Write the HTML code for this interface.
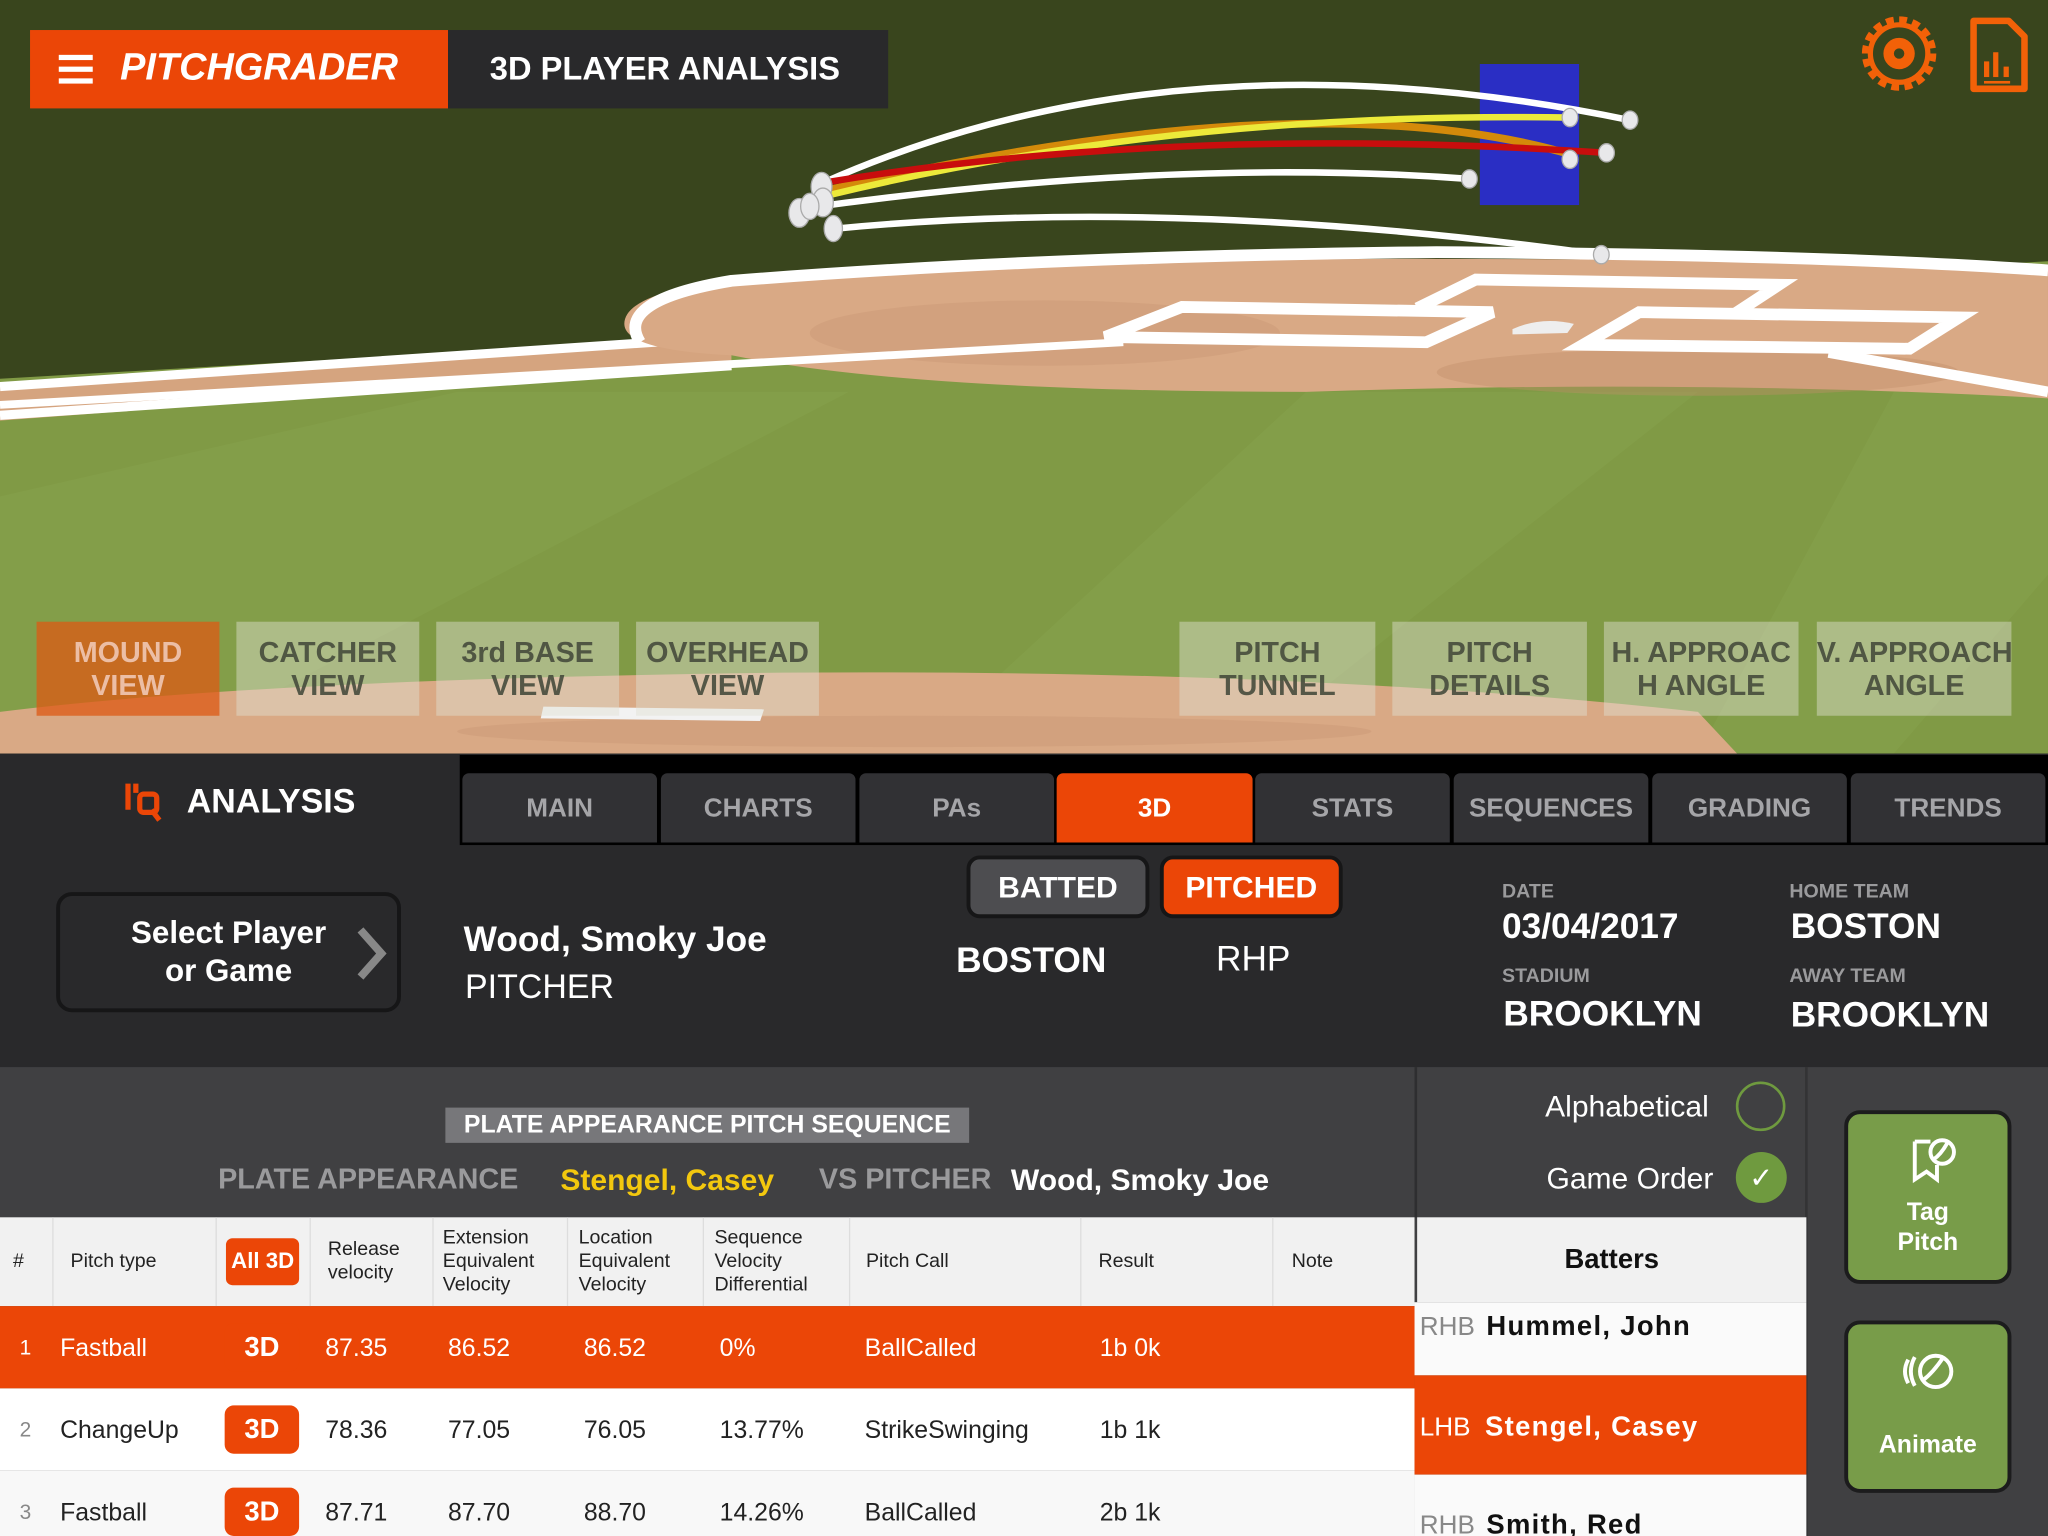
<!DOCTYPE html>
<html><head><meta charset="utf-8">
<style>
*{margin:0;padding:0;box-sizing:border-box}
html,body{width:2048px;height:1536px;overflow:hidden;background:#2a2a2c}
#w{position:absolute;left:0;top:0;width:1568px;height:1176px;transform:scale(1.30612);transform-origin:0 0;font-family:"Liberation Sans",sans-serif;overflow:hidden}
.a{position:absolute}
.vb{position:absolute;top:476px;height:72px;background:rgba(225,225,210,0.45);color:rgba(70,75,60,0.9);font-weight:bold;font-size:22px;line-height:25px;text-align:center;padding-top:11px}
.tab{position:absolute;top:592px;height:53px;width:149px;background:#313134;border-radius:5px 5px 0 0;color:#a5a5a8;font-weight:bold;font-size:20px;text-align:center;line-height:54px}
.lbl{position:absolute;color:#9a9a9c;font-weight:bold;font-size:15px}
.val{position:absolute;color:#fff;font-weight:bold;font-size:27px}
.th{position:absolute;top:932px;height:68px;color:#222;font-size:15px;line-height:18px;display:flex;align-items:center;border-left:1px solid #ddd;padding-left:10px}
.row{position:absolute;left:0;width:1083px;height:63px;font-size:19px;color:#222}
.row span{position:absolute;top:22px}
.b3{position:absolute;left:172px;top:13px;width:57px;height:37px;background:#eb4607;border-radius:7px;color:#fff;font-weight:bold;font-size:21px;text-align:center;line-height:37px}
</style></head><body><div id="w">

<svg class="a" style="left:0;top:0" width="1568" height="577" viewBox="0 0 1568 577">
<rect width="1568" height="577" fill="#39451d"/>
<path d="M0 290 L1568 200 L1568 577 L0 577Z" fill="#809a45"/>
<path d="M0 380 L350 300 L650 300 L120 577 L0 577Z" fill="#8aa54f" opacity=".35"/>
<path d="M1000 300 L1300 300 L950 577 L700 577Z" fill="#8aa54f" opacity=".35"/>
<path d="M1450 300 L1568 300 L1568 440 L1450 577 L1300 577Z" fill="#8aa54f" opacity=".35"/>
<path d="M0 296 L560 258 L560 280 L0 322Z" fill="#d5a47f"/>
<path d="M0 296 L560 258" stroke="#fff" stroke-width="7"/>
<path d="M0 318 L560 280" stroke="#fff" stroke-width="7"/>
<path d="M478 248 Q478 215 640 208 Q1000 190 1568 205 L1568 305 Q1300 290 1000 300 Q700 300 560 272 Q478 268 478 248Z" fill="#d9a985"/>
<path d="M490 262 Q470 230 560 215 Q800 196 1100 193 Q1400 195 1568 207" stroke="#fff" stroke-width="9" fill="none"/>
<ellipse cx="800" cy="255" rx="180" ry="25" fill="#c89772" opacity=".4"/>
<ellipse cx="1300" cy="285" rx="200" ry="18" fill="#c08e6a" opacity=".4"/>
<g stroke="#fff" stroke-width="9" fill="none">
<path d="M846 258 L905 235 L1143 239 L1092 262Z"/>
<path d="M1212 264 L1255 239 L1500 243 L1462 267Z"/>
<path d="M1085 236 L1130 214 L1362 218 L1327 241"/>
</g>
<path d="M1158 252 Q1180 242 1205 248 L1200 255 L1158 256Z" fill="#eee"/>
<path d="M0 310 L860 262" stroke="#fff" stroke-width="6"/>
<path d="M1400 270 L1568 300" stroke="#fff" stroke-width="8"/>
<path d="M0 545 Q200 520 600 515 Q1000 512 1300 545 L1330 577 L0 577Z" fill="#d9a985"/>
<ellipse cx="700" cy="560" rx="350" ry="12" fill="#c89772" opacity=".4"/>
<path d="M416 541 L585 543 L582 552 L414 550Z" fill="#f2f2f2"/>
<rect x="1133" y="49" width="76" height="108" fill="#2a2ec4"/>
<g fill="none" stroke-linecap="round">
<path d="M630 140 Q900 20 1248 92" stroke="#fff" stroke-width="5"/>
<path d="M632 146 Q1000 60 1202 118" stroke="#d48a0a" stroke-width="6"/>
<path d="M632 150 Q900 85 1202 90" stroke="#ecea3a" stroke-width="5"/>
<path d="M630 140 Q900 95 1230 117" stroke="#c80d0d" stroke-width="5"/>
<path d="M612 160 Q900 120 1125 137" stroke="#fff" stroke-width="5"/>
<path d="M640 175 Q900 150 1226 195" stroke="#fff" stroke-width="5"/>
</g>
<g fill="#e8e8ea" stroke="#aaa" stroke-width="1">
<ellipse cx="1248" cy="92" rx="6" ry="7"/><ellipse cx="1202" cy="90" rx="6" ry="7"/><ellipse cx="1202" cy="122" rx="6" ry="7"/><ellipse cx="1230" cy="117" rx="6" ry="7"/><ellipse cx="1125" cy="137" rx="6" ry="7"/><ellipse cx="1226" cy="195" rx="6" ry="7"/>
<ellipse cx="629" cy="143" rx="8" ry="11"/><ellipse cx="630" cy="155" rx="8" ry="11"/><ellipse cx="612" cy="163" rx="8" ry="11"/><ellipse cx="620" cy="158" rx="7" ry="10"/><ellipse cx="638" cy="175" rx="7" ry="10"/>
</g>
<g transform="translate(1454,41)" fill="none" stroke="#f26108">
<circle r="26" stroke-width="5" stroke-dasharray="6 4.2"/>
<circle r="22" stroke-width="4"/>
<circle r="8" stroke-width="8"/>
</g>
<path d="M1511 16 L1538 16 L1550 28 L1550 68 L1511 68Z" fill="none" stroke="#f26108" stroke-width="5" stroke-linejoin="round"/>
<g fill="#f26108"><rect x="1519" y="47" width="4" height="12"/><rect x="1526" y="40" width="4" height="19"/><rect x="1534" y="51" width="4" height="8"/><rect x="1519" y="62" width="20" height="2"/><rect x="1519" y="66" width="20" height="2"/></g>
</svg>

<div class="a" style="left:23px;top:23px;width:320px;height:60px;background:#eb4607"></div>
<div class="a" style="left:45px;top:42px;width:26px;height:4px;background:#fff;box-shadow:0 9px 0 #fff,0 18px 0 #fff"></div>
<div class="a" style="left:92px;top:36px;color:#fff;font-weight:bold;font-style:italic;font-size:29px">PITCHGRADER</div>
<div class="a" style="left:343px;top:23px;width:337px;height:60px;background:#29292b;color:#fff;font-weight:bold;font-size:25px;line-height:61px;padding-left:32px">3D PLAYER ANALYSIS</div>

<div class="vb" style="left:28px;width:140px;background:rgba(220,90,20,0.75);color:rgba(240,200,180,0.9)">MOUND<br>VIEW</div>
<div class="vb" style="left:181px;width:140px">CATCHER<br>VIEW</div>
<div class="vb" style="left:334px;width:140px">3rd BASE<br>VIEW</div>
<div class="vb" style="left:487px;width:140px">OVERHEAD<br>VIEW</div>
<div class="vb" style="left:903px;width:150px">PITCH<br>TUNNEL</div>
<div class="vb" style="left:1066px;width:149px">PITCH<br>DETAILS</div>
<div class="vb" style="left:1228px;width:149px;white-space:nowrap">H. APPROAC<br>H ANGLE</div>
<div class="vb" style="left:1391px;width:149px;white-space:nowrap">V. APPROACH<br>ANGLE</div>

<div class="a" style="left:0;top:577px;width:1568px;height:240px;background:#29292b"></div>
<div class="a" style="left:352px;top:578px;width:1216px;height:69px;background:#000"></div>
<svg class="a" style="left:94px;top:598px" width="34" height="32"><g stroke="#eb4607" stroke-width="4" fill="none"><path d="M4 2 V22"/><path d="M10 2 V9"/><rect x="13" y="10" width="13" height="14" rx="3"/><path d="M22 22 L28 30"/></g></svg>
<div class="a" style="left:143px;top:598px;color:#fff;font-weight:bold;font-size:26px">ANALYSIS</div>
<div class="tab" style="left:354px">MAIN</div>
<div class="tab" style="left:506px">CHARTS</div>
<div class="tab" style="left:658px">PAs</div>
<div class="tab" style="left:809px;width:150px;background:#eb4607;color:#fff">3D</div>
<div class="tab" style="left:961px">STATS</div>
<div class="tab" style="left:1113px">SEQUENCES</div>
<div class="tab" style="left:1265px">GRADING</div>
<div class="tab" style="left:1417px">TRENDS</div>

<div class="a" style="left:43px;top:683px;width:264px;height:92px;border:3px solid #161617;border-radius:12px;background:#29292b"></div>
<div class="a" style="left:80px;top:700px;width:190px;text-align:center;color:#fff;font-weight:bold;font-size:24px;line-height:29px">Select Player<br>or Game</div>
<svg class="a" style="left:270px;top:708px" width="30" height="44"><path d="M6 4 L22 22 L6 40" stroke="#888" stroke-width="6" fill="none"/></svg>
<div class="a" style="left:355px;top:704px;color:#fff;font-weight:bold;font-size:27px">Wood, Smoky Joe</div>
<div class="a" style="left:356px;top:740px;color:#fff;font-size:26px">PITCHER</div>

<div class="a" style="left:740px;top:655px;width:140px;height:48px;background:#4d4d50;border:3px solid #161617;border-radius:10px;color:#fff;font-weight:bold;font-size:23px;text-align:center;line-height:42px">BATTED</div>
<div class="a" style="left:888px;top:655px;width:140px;height:48px;background:#eb4607;border:3px solid #161617;border-radius:10px;color:#fff;font-weight:bold;font-size:23px;text-align:center;line-height:42px">PITCHED</div>
<div class="a" style="left:732px;top:720px;color:#fff;font-weight:bold;font-size:27px">BOSTON</div>
<div class="a" style="left:931px;top:719px;color:#fff;font-size:27px">RHP</div>

<div class="lbl" style="left:1150px;top:674px">DATE</div>
<div class="val" style="left:1150px;top:694px">03/04/2017</div>
<div class="lbl" style="left:1150px;top:739px">STADIUM</div>
<div class="val" style="left:1151px;top:761px">BROOKLYN</div>
<div class="lbl" style="left:1370px;top:674px">HOME TEAM</div>
<div class="val" style="left:1371px;top:694px">BOSTON</div>
<div class="lbl" style="left:1370px;top:739px">AWAY TEAM</div>
<div class="val" style="left:1371px;top:762px">BROOKLYN</div>

<div class="a" style="left:0;top:817px;width:1568px;height:359px;background:#404042"></div>
<div class="a" style="left:1083px;top:817px;width:2px;height:115px;background:#2e2e30"></div>
<div class="a" style="left:1382px;top:817px;width:2px;height:359px;background:#333335"></div>
<div class="a" style="left:341px;top:848px;width:401px;height:27px;background:#77777a;color:#fff;font-weight:bold;font-size:19px;text-align:center;line-height:28px">PLATE APPEARANCE PITCH SEQUENCE</div>
<div class="a" style="left:167px;top:890px;color:#9a9a9c;font-weight:bold;font-size:22px">PLATE APPEARANCE</div>
<div class="a" style="left:429px;top:890px;color:#f3c80e;font-weight:bold;font-size:23px">Stengel, Casey</div>
<div class="a" style="left:627px;top:890px;color:#9a9a9c;font-weight:bold;font-size:22px">VS PITCHER</div>
<div class="a" style="left:774px;top:890px;color:#fff;font-weight:bold;font-size:23px">Wood, Smoky Joe</div>

<div class="a" style="left:1183px;top:834px;color:#fff;font-size:23px">Alphabetical</div>
<div class="a" style="left:1329px;top:828px;width:38px;height:38px;border:2px solid #6f9a3f;border-radius:50%"></div>
<div class="a" style="left:1184px;top:889px;color:#fff;font-size:23px">Game Order</div>
<div class="a" style="left:1329px;top:882px;width:39px;height:39px;background:#6f9a3f;border-radius:50%;color:#fff;font-size:22px;text-align:center;line-height:39px">✓</div>

<div class="a" style="left:0;top:932px;width:1083px;height:68px;background:#f1f1f1"></div>
<div class="th" style="left:0;width:40px;border:none">#</div>
<div class="th" style="left:40px;width:125px;padding-left:13px">Pitch type</div>
<div class="th" style="left:165px;width:72px;padding-left:7px"><span style="background:#eb4607;color:#fff;font-weight:bold;font-size:17px;border-radius:5px;padding:9px 4px">All 3D</span></div>
<div class="th" style="left:237px;width:94px;padding-left:13px">Release<br>velocity</div>
<div class="th" style="left:331px;width:103px;padding-left:7px">Extension<br>Equivalent<br>Velocity</div>
<div class="th" style="left:434px;width:104px;padding-left:8px">Location<br>Equivalent<br>Velocity</div>
<div class="th" style="left:538px;width:112px;padding-left:8px">Sequence<br>Velocity<br>Differential</div>
<div class="th" style="left:650px;width:177px;padding-left:12px">Pitch Call</div>
<div class="th" style="left:827px;width:147px;padding-left:13px">Result</div>
<div class="th" style="left:974px;width:109px;padding-left:14px">Note</div>

<div class="row" style="top:1000px;background:#eb4607;color:#fff"><span style="left:15px;font-size:16px;top:24px">1</span><span style="left:46px">Fastball</span><div class="b3">3D</div><span style="left:249px">87.35</span><span style="left:343px">86.52</span><span style="left:447px">86.52</span><span style="left:551px">0%</span><span style="left:662px">BallCalled</span><span style="left:842px">1b 0k</span></div>
<div class="row" style="top:1063px;background:#fff"><span style="left:15px;font-size:16px;top:24px;color:#888">2</span><span style="left:46px">ChangeUp</span><div class="b3">3D</div><span style="left:249px">78.36</span><span style="left:343px">77.05</span><span style="left:447px">76.05</span><span style="left:551px">13.77%</span><span style="left:662px">StrikeSwinging</span><span style="left:842px">1b 1k</span></div>
<div class="row" style="top:1126px;background:#f8f8f8"><span style="left:15px;font-size:16px;top:24px;color:#888">3</span><span style="left:46px">Fastball</span><div class="b3">3D</div><span style="left:249px">87.71</span><span style="left:343px">87.70</span><span style="left:447px">88.70</span><span style="left:551px">14.26%</span><span style="left:662px">BallCalled</span><span style="left:842px">2b 1k</span></div>

<div class="a" style="left:1085px;top:932px;width:298px;height:65px;background:#f1f1f1;color:#111;font-weight:bold;font-size:21px;text-align:center;line-height:66px">Batters</div>
<div class="a" style="left:1083px;top:997px;width:300px;height:56px;background:#fafafa"></div>
<div class="a" style="left:1087px;top:1005px;font-size:20px;color:#888">RHB</div>
<div class="a" style="left:1138px;top:1004px;font-size:21px;font-weight:bold;color:#111;letter-spacing:1px">Hummel, John</div>
<div class="a" style="left:1083px;top:1053px;width:300px;height:76px;background:#eb4607"></div>
<div class="a" style="left:1087px;top:1082px;font-size:20px;color:#fff">LHB</div>
<div class="a" style="left:1137px;top:1081px;font-size:21px;font-weight:bold;color:#fff;letter-spacing:1px">Stengel, Casey</div>
<div class="a" style="left:1083px;top:1129px;width:300px;height:47px;background:#fafafa"></div>
<div class="a" style="left:1087px;top:1157px;font-size:20px;color:#888">RHB</div>
<div class="a" style="left:1138px;top:1156px;font-size:21px;font-weight:bold;color:#111;letter-spacing:1px">Smith, Red</div>

<div class="a" style="left:1412px;top:850px;width:128px;height:133px;background:#789c49;border:3px solid #1c1c1d;border-radius:12px"></div>
<svg class="a" style="left:1458px;top:868px" width="40" height="40"><g stroke="#fff" stroke-width="3" fill="none"><path d="M8 6 V35 L17 29 L25 35 V24"/><path d="M8 6 H20"/><circle cx="29" cy="14" r="9"/><path d="M22 20 Q28 16 33 7"/></g></svg>
<div class="a" style="left:1412px;top:917px;width:128px;text-align:center;color:#fff;font-size:19px;font-weight:bold;line-height:23px">Tag<br>Pitch</div>
<div class="a" style="left:1412px;top:1011px;width:128px;height:132px;background:#789c49;border:3px solid #1c1c1d;border-radius:12px"></div>
<svg class="a" style="left:1456px;top:1033px" width="42" height="36"><g stroke="#fff" stroke-width="3" fill="none"><circle cx="26" cy="17" r="12"/><path d="M16 24 Q24 18 32 6"/><path d="M10 6 Q4 17 10 28"/><path d="M5 8 Q0 17 5 26"/></g></svg>
<div class="a" style="left:1412px;top:1096px;width:128px;text-align:center;color:#fff;font-size:19px;font-weight:bold">Animate</div>

</div></body></html>
